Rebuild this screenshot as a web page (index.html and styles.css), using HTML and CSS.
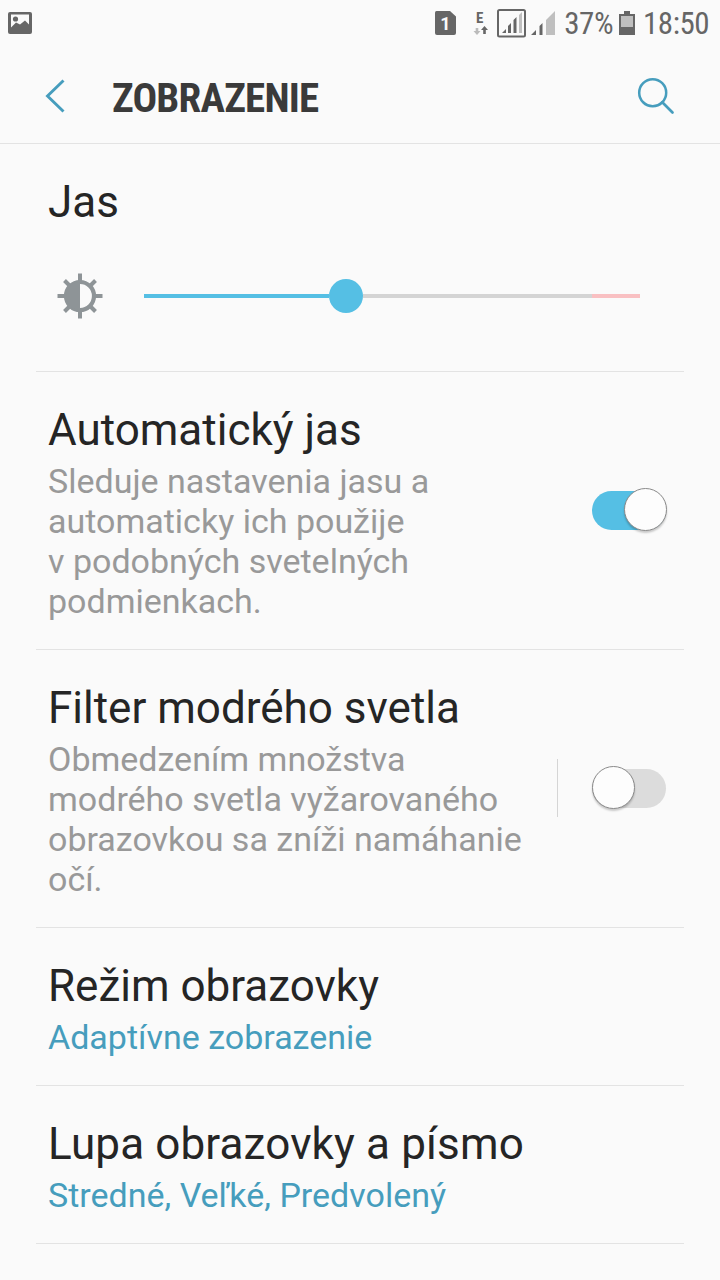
FILE: index.html
```html
<!DOCTYPE html>
<html lang="sk">
<head>
<meta charset="utf-8">
<title>Zobrazenie</title>
<link rel="stylesheet" href="styles.css">
</head>
<body>
<div class="status">
  <svg class="pic" width="24" height="24" viewBox="8 11 24 24"><rect x="8" y="12" width="24" height="22" rx="2" fill="#666"/><path d="M11 14.500h18v10l-4-4-5 4-4-2-5 5z" fill="#fafafa"/><circle cx="15.500" cy="19" r="2.600" fill="#666"/></svg>
  <svg class="icons" width="122" height="30" viewBox="434 8 122 30">
    <path d="M436.500 11H450l6 5.500V33q0 2-2 2h-17q-2 0-2-2V12.500q0-1.500 1.500-1.500z" fill="#666"/>
    <text x="440.300" y="30" class="sim">1</text>
    <text x="476" y="23" class="edge">E</text>
    <path d="M475.700 28h2.600v3h2.200l-3.500 4-3.500-4h2.200z" fill="#bbb"/>
    <path d="M483.200 34h2.600v-4h2.200l-3.500-4-3.500 4h2.200z" fill="#666"/>
    <rect x="498" y="10" width="27" height="26.500" rx="1.500" fill="none" stroke="#666" stroke-width="2"/>
    <path d="M502 33l4-4v4zM508 33v-7l3-3v10zM513.500 33V20l3-3v16z" fill="#666"/>
    <path d="M519 33V15l3-3v21z" fill="#bfbfbf"/>
    <path d="M531 35l5-5v5zM539.500 35v-9l3-3v12z" fill="#666"/>
    <path d="M546 35V20l9-9v24z" fill="#bfbfbf"/>
  </svg>
  <span class="pct">37%</span>
  <svg class="bat" width="16" height="24" viewBox="0 0 16 24"><path d="M5 0h6v3h5v21H0V3h5z" fill="#666"/><path d="M2 5h12v11H2z" fill="#bfbfbf"/></svg>
  <span class="time">18:50</span>
</div>
<header class="bar"><svg class="back" width="22" height="35" viewBox="0 0 22 35"><path d="M18.500 2.500 2.500 18l16 15.500" fill="none" stroke="#469dbd" stroke-width="2.900"/></svg><h1>ZOBRAZENIE</h1><svg class="search" width="40" height="41" viewBox="0 0 40 41"><circle cx="17.700" cy="17.700" r="13.500" fill="none" stroke="#469dbd" stroke-width="2.500"/><path d="m27.300 27.300 10.200 10.200" stroke="#469dbd" stroke-width="2.700" stroke-linecap="round"/></svg></header>
<main>
<section class="item bright"><h2>Jas</h2><div class="slider"><svg width="48" height="48" viewBox="-24 -24 48 48"><path d="M0-22.500V22.500M-22.500 0H22.500M-15.500-15.500 15.500 15.500M15.500-15.500-15.500 15.500" stroke="#8e9497" stroke-width="4"/><circle r="14" fill="#fafafa" stroke="#8e9497" stroke-width="4.200"/><path d="M0-14a14 14 0 0 0 0 28z" fill="#8e9497"/></svg><div class="track"><div class="filled"></div><div class="thumb"></div><div class="rest"></div><div class="over"></div></div></div></section>
<section class="item tall"><div><h2>Automatický jas</h2><p>Sleduje nastavenia jasu a<br>automaticky ich použije<br>v podobných svetelných<br>podmienkach.</p></div><div class="switch on"><i></i></div></section>
<section class="item tall"><div><h2>Filter modrého svetla</h2><p>Obmedzením množstva<br>modrého svetla vyžarovaného<br>obrazovkou sa zníži namáhanie<br>očí.</p></div><div class="split"></div><div class="switch"><i></i></div></section>
<section class="item short"><div><h2>Režim obrazovky</h2><p class="link">Adaptívne zobrazenie</p></div></section>
<section class="item short"><div><h2 class="wide">Lupa obrazovky a písmo</h2><p class="link">Stredné, Veľké, Predvolený</p></div></section>
</main>
</body>
</html>
```
FILE: styles.css
```css
*{box-sizing:border-box}
body{margin:0;width:720px;height:1280px;overflow:hidden;background:#fafafa;font-family:Roboto,"Noto Sans",sans-serif;color:#252525}
svg{display:block;flex:none}
h1,h2,p{margin:0;white-space:nowrap}
.status{height:48px;display:flex;align-items:center;padding:0 11px 2px 8px;color:#666;font-family:"Roboto Condensed",Roboto,sans-serif;font-size:31px;letter-spacing:-.5px}
.icons{margin-left:auto}
.sim{font:bold 18px Roboto,sans-serif;letter-spacing:0;fill:#fafafa}
.edge{font:bold 15px "Roboto Condensed",Roboto,sans-serif;letter-spacing:0;fill:#666}
.pct{margin-left:8px}
.bat{margin:0 8px 0 6px}
.bar{height:96px;display:flex;align-items:center;padding:0 45px;border-bottom:1px solid #e3e3e3}
h1{font:bold 41px "Roboto Condensed",Roboto,sans-serif;letter-spacing:-.8px;color:#3a3a3a;margin-left:45px;padding-top:5px}
.search{margin-left:auto}
.item{margin:0 36px;padding:0 12px;border-bottom:1px solid #e3e3e3;display:flex}
h2{font-weight:400;font-size:44px;line-height:52px}
.wide{letter-spacing:.14px}
p{font-size:34px;line-height:40px;color:#999;margin-top:5px}
.link{color:#469dbd}
.bright{height:228px;padding-top:32px;display:block}
.slider{display:flex;align-items:center;margin:44px 0 0 8px}
.track{display:flex;align-items:center;width:496px;margin-left:40px}
.filled{width:185px;height:4px;background:#55bfe4}
.thumb{width:34px;height:34px;border-radius:50%;background:#55bfe4}
.rest{width:229px;height:4px;background:#d4d4d4}
.over{width:48px;height:4px;background:#f9c0c2}
.tall{height:278px;padding-top:32px}
.short{height:158px;padding-top:32px}
.switch{width:74px;height:39px;border-radius:20px;background:#dcdcdc;margin:87px 6px 0 auto;display:flex;align-items:center;flex:none}
.switch i{width:43px;height:43px;margin-top:-2px;border-radius:50%;background:#fdfdfd;border:1px solid #8a8a8a;box-shadow:0 2px 2px rgba(0,0,0,.2);flex:none}
.on{background:#55bfe4;justify-content:flex-end}
.on i{margin-right:-1px}
.split{width:1px;height:58px;background:#d5d5d5;margin:77px 0 0 auto}
.split+.switch{margin-left:34px}
```
